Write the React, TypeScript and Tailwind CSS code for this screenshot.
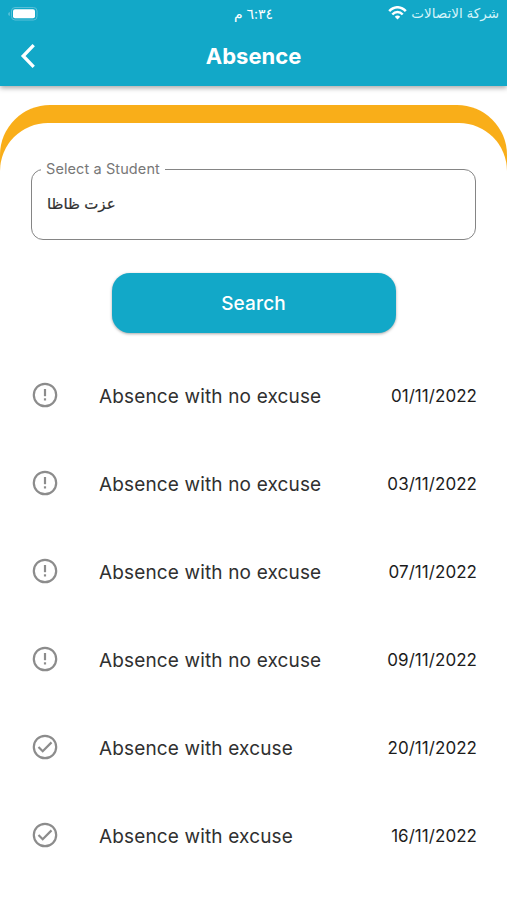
type Absence = { date: string; excused: boolean };

const absences: Absence[] = [
  { date: "01/11/2022", excused: false },
  { date: "03/11/2022", excused: false },
  { date: "07/11/2022", excused: false },
  { date: "09/11/2022", excused: false },
  { date: "20/11/2022", excused: true },
  { date: "16/11/2022", excused: true },
];

function StatusBar() {
  return (
    <div className="grid h-[27px] grid-cols-3 items-center px-[8px]">
      <svg width="30" height="14" viewBox="0 0 30 14" fill="none">
        <path d="M1.5 5v4C.2 8.500.2 5.500 1.500 5z" fill="#8fd5e5" />
        <rect x="3.500" y="0.500" width="25.500" height="12.500" rx="3.500" stroke="#58bfd7" />
        <rect x="5" y="2.300" width="22" height="9" rx="2" fill="#fff" />
      </svg>
      <span dir="rtl" className="-mt-px text-center text-[14px] whitespace-nowrap">٦:٣٤ م</span>
      <div className="flex items-center justify-end gap-[4px]">
        <svg className="-mt-px" width="19" height="14" viewBox="0 0 19 14" fill="none" stroke="#fff" strokeWidth="2.500">
          <path d="M1.200 5.200C6-.1 13-.1 17.800 5.200" />
          <path d="M4.300 8.500C7.300 5.300 11.700 5.300 14.700 8.500" />
          <path d="M9.500 13.500L6.800 10.700C8.300 9.200 10.700 9.200 12.200 10.700z" fill="#fff" stroke="none" />
        </svg>
        <span dir="rtl" className="text-[13.5px] whitespace-nowrap text-[#d5f4fa]">شركة الاتصالات</span>
      </div>
    </div>
  );
}

function Header() {
  return (
    <header className="relative h-[86px] bg-[#12a8c8] text-white shadow-[0_2px_5px_rgba(0,0,0,0.35)]">
      <StatusBar />
      <div className="grid h-[58px] grid-cols-[60px_1fr_60px] items-center">
        <svg className="ml-[20px]" width="16" height="24" viewBox="0 0 16 24" fill="none" stroke="#fff" strokeWidth="3.300">
          <path d="M13.700 1.200L3.200 12L13.700 22.800" />
        </svg>
        <h1 className="text-center text-[22px] leading-[28px] font-bold">Absence</h1>
      </div>
    </header>
  );
}

function StatusIcon({ excused }: { excused: boolean }) {
  return (
    <svg className="-mt-[2px]" width="30" height="30" viewBox="0 0 30 30" fill="none" stroke="#8c8c8c" strokeWidth="2.200">
      <circle cx="15" cy="15" r="11.200" />
      {excused ? (
        <path d="M8.500 15L12.700 19.200L21.500 10.400" />
      ) : (
        <>
          <path d="M15 9V16.200" />
          <path d="M15 18.300V20.500" />
        </>
      )}
    </svg>
  );
}

function AbsenceRow({ date, excused }: Absence) {
  return (
    <li className="flex h-[88px] items-center px-[30px]">
      <StatusIcon excused={excused} />
      <span className="mt-[2px] ml-[39px] flex-1 text-[19px] tracking-[0.15px] text-[#303030]">
        {excused ? "Absence with excuse" : "Absence with no excuse"}
      </span>
      <span className="mt-px text-[17px] tracking-[0.05px] text-[#1c1c1c]">{date}</span>
    </li>
  );
}

export default function App() {
  return (
    <div className="h-[900px] w-[507px] overflow-hidden bg-white font-['Inter','DejaVu_Sans',sans-serif]">
      <Header />
      <main className="mt-[19px] h-[795px] rounded-t-[50px] bg-[#f9ae19] pt-[18px]">
        <div className="h-[777px] rounded-t-[48px] bg-white pt-[36px]">
          <fieldset className="mx-[31px] h-[81px] rounded-[12px] border border-[#858585] pl-[15px]">
            <legend className="-ml-[6px] h-[20px] px-[5px] text-[14.5px] leading-[20px] tracking-[0.1px] text-[#777]">
              Select a Student
            </legend>
            <div className="flex h-[51px] items-center text-[#303030]">
              <span dir="rtl" className="text-[15px] [-webkit-text-stroke:0.2px]">عزت ظاظا</span>
            </div>
          </fieldset>
          <button className="mx-auto mt-[33px] block h-[60px] w-[284px] rounded-[18px] bg-[#12a8c8] pt-[2px] text-[19px] font-medium tracking-[0.15px] text-white shadow-[0_1px_3px_rgba(0,0,0,0.35)]">
            Search
          </button>
          <ul className="mt-[19px]">
            {absences.map((absence) => (
              <AbsenceRow key={absence.date} {...absence} />
            ))}
          </ul>
        </div>
      </main>
    </div>
  );
}
